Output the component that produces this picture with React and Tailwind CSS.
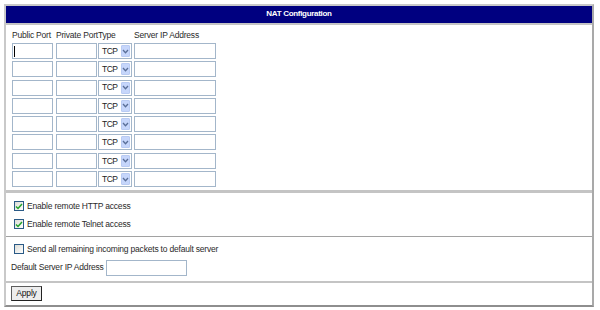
import React from 'react'

const font = { fontFamily: '"Liberation Sans", Arial, sans-serif' }

const TextBox = ({ className = '', caret = false }) => (
  <div className={`relative h-[16px] border border-[#a3b6ca] bg-white ${className}`}>
    {caret && <div className="absolute left-[1px] top-[2px] h-[11px] w-[1px] bg-black" />}
  </div>
)

const Select = () => (
  <div className="flex h-[16px] items-center justify-between border border-[#a3b6ca] bg-white pl-[3px] pr-[1px]">
    <span className="text-[8.5px] leading-none tracking-[-0.5px] text-[#222]">TCP</span>
    <div className="flex h-[12px] w-[9px] items-center justify-center rounded-[1px] border border-[#b9cbf3] bg-[#c6d6fb]">
      <svg width="7" height="5" viewBox="0 0 7 5">
        <polyline points="1,1 3.5,3.8 6,1" fill="none" stroke="#5a6f98" strokeWidth="1.3" />
      </svg>
    </div>
  </div>
)

const CheckBox = ({ checked }) => (
  <div className="flex h-[10px] w-[10px] shrink-0 items-center justify-center border border-[#2a5a86] bg-gradient-to-br from-[#dcdcd6] to-white">
    {checked && (
      <svg width="8" height="7" viewBox="0 0 8 7">
        <polyline points="1,3.5 3,5.5 7,1" fill="none" stroke="#22a22a" strokeWidth="1.5" />
      </svg>
    )}
  </div>
)

const rows = [0, 1, 2, 3, 4, 5, 6, 7]

export default function App() {
  return (
    <div className="h-[310px] w-[600px] bg-white pl-[4px] pt-[4px]" style={font}>
      <div className="flex h-[303px] w-[590px] flex-col border-2 border-t-[#c9c9c9] border-l-[#c9c9c9] border-r-[#a9a9a9] border-b-[#8e8e8e] text-[8.5px] tracking-[-0.2px] text-[#2a2a2a]">
        <div className="flex h-[19px] items-center justify-center border-b-2 border-[#c4c4c4] bg-[#000080] pb-[2px] text-[8px] font-bold tracking-[-0.3px] text-white">
          NAT Configuration
        </div>

        <div className="border-b-[3px] border-[#c4c4c4] pb-[3px] pl-[6px]">
          <div className="grid h-[18px] grid-cols-[41px_41px_34px_82px] gap-x-[2px] pt-[4px]">
            <div className="whitespace-nowrap">Public Port</div>
            <div className="whitespace-nowrap pl-[1px]">Private Port</div>
            <div>Type</div>
            <div className="whitespace-nowrap">Server IP Address</div>
          </div>
          <div className="flex flex-col gap-y-[2.3px]">
            {rows.map((r) => (
              <div key={r} className="grid grid-cols-[41px_41px_34px_82px] gap-x-[2px]">
                <TextBox caret={r === 0} />
                <TextBox className="ml-[1px] w-[41px]" />
                <Select />
                <TextBox />
              </div>
            ))}
          </div>
        </div>

        <div className="flex flex-col border-b border-[#a2a2a2] pb-[3px] pl-[8px] pt-[4px]">
          <label className="flex h-[18px] items-center gap-[3px]">
            <CheckBox checked />
            <span>Enable remote HTTP access</span>
          </label>
          <label className="flex h-[18px] items-center gap-[3px]">
            <CheckBox checked />
            <span>Enable remote Telnet access</span>
          </label>
        </div>

        <div className="flex flex-col border-b-2 border-[#c4c4c4] pb-[4px] pl-[5px] pt-[3px]">
          <label className="flex h-[18px] items-center gap-[3px] pl-[3px]">
            <CheckBox />
            <span>Send all remaining incoming packets to default server</span>
          </label>
          <div className="flex h-[19px] items-center gap-[2px]">
            <span>Default Server IP Address</span>
            <TextBox className="w-[81px]" />
          </div>
        </div>

        <div className="flex flex-1 items-start pl-[5px] pt-[3px]">
          <button className="h-[15px] w-[31px] border border-[#5c5c5c] border-b-[#222] border-r-[#222] bg-[#ededed] text-[8.5px] leading-none text-[#111]">
            Apply
          </button>
        </div>
      </div>
    </div>
  )
}
